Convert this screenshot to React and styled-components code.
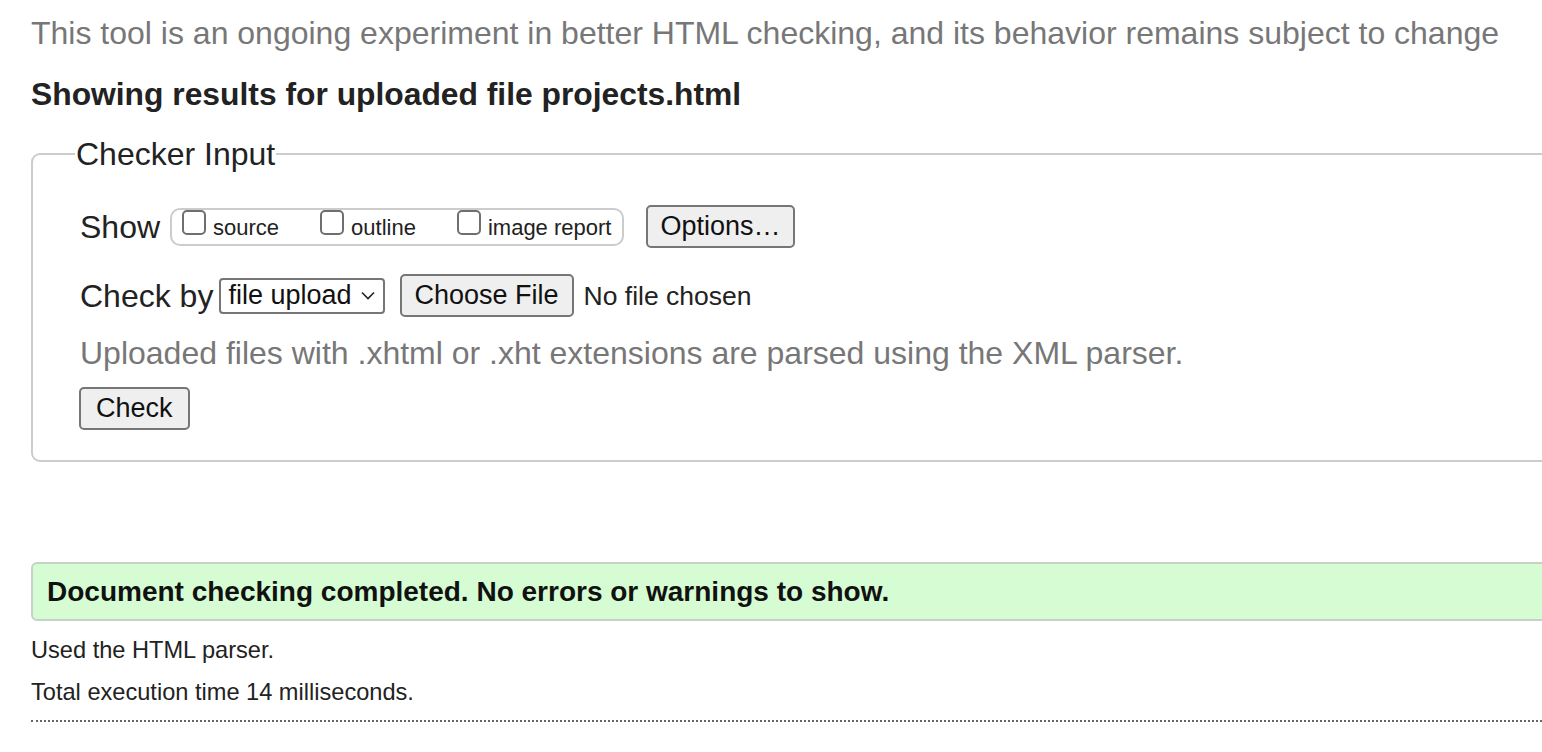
import React from "react";
import styled, { createGlobalStyle } from "styled-components";

const Global = createGlobalStyle`
  html, body {
    margin: 0;
    padding: 0;
    background: #fff;
    overflow: hidden;
  }
  body {
    font-family: "Liberation Sans", Arial, Helvetica, sans-serif;
    color: #222;
  }
`

const Page = styled.div`
  width: calc(100vw + 40px);
  padding: 16px 0 0 31px;
  box-sizing: border-box;
`

const Notice = styled.p`
  margin: 0;
  font-size: 32px;
  line-height: 34px;
  color: #777;
`

const Heading = styled.h2`
  margin: 27px 0 0;
  font-size: 31.8px;
  line-height: 34px;
  font-weight: bold;
  color: #222;
`

const Fieldset = styled.fieldset`
  margin: 26px 0 0;
  padding: 7px 0 30px 47px;
  border: 2px solid #ccc;
  border-radius: 9px;
  min-width: 0;
`

const Legend = styled.legend`
  font-size: 32px;
  line-height: 34px;
  padding: 0 1px;
  margin-left: -5px;
  color: #222;
`

const Row = styled.div`
  display: flex;
  align-items: center;
  gap: ${p => p.$gap || 10}px;
  margin-top: ${p => p.$top || 0}px;
`

const Label = styled.span`
  font-size: ${p => p.$size || 32}px;
  line-height: 34px;
  color: #222;
`

const Group = styled.div`
  display: flex;
  align-items: flex-end;
  height: 34px;
  padding: 0 11px 0 10px;
  border: 2px solid #ccc;
  border-radius: 10px;
  gap: 41px;
  margin-right: 12px;
`

const Choice = styled.label`
  display: flex;
  align-items: flex-end;
  gap: 7px;
  font-size: 22px;
  line-height: 26px;
  color: #222;
  padding-bottom: 3px;
`

const Box = styled.span`
  display: inline-block;
  width: 20px;
  height: 21px;
  border: 2px solid #6f6f6f;
  border-radius: 5px;
  margin-bottom: 6px;
  background: #fff;
`

const Button = styled.button`
  font-family: "Liberation Sans", Arial, sans-serif;
  font-size: 27px;
  line-height: 31px;
  color: #111;
  background: #efefef;
  border: 2px solid #767676;
  border-radius: 5px;
  padding: 4px ${p => p.$pad || 14}px 4px;
  margin: 0 0 0 ${p => p.$left || 0}px;
`

const Select = styled.div`
  display: flex;
  align-items: center;
  gap: 9px;
  height: 32px;
  padding: 0 8px 0 7px;
  border: 2px solid #767676;
  border-radius: 4px;
  font-size: 27px;
  color: #111;
  margin-left: -4px;
`

const Hint = styled.p`
  margin: 19px 0 0;
  font-size: 32px;
  line-height: 34px;
  color: #777;
`

const Status = styled.div`
  margin-top: 100px;
  height: 55px;
  display: flex;
  align-items: center;
  padding-left: 14px;
  border: 2px solid #c6d2c6;
  border-radius: 6px;
  background: #d5fcd2;
  font-size: 28px;
  font-weight: bold;
  color: #111;
`

const Info = styled.p`
  margin: ${p => p.$top || 0}px 0 0;
  font-size: 23.6px;
  line-height: 26px;
  color: #222;
`

const Rule = styled.div`
  margin-top: 15px;
  border-top: 2px dotted #666;
`

const Chevron = () => (
  <svg width="14" height="9" viewBox="0 0 14 9" fill="none">
    <path d="M1 1.5 L7 7.5 L13 1.5" stroke="#222" strokeWidth="1.6" />
  </svg>
)

export default function App() {
  return (
    <Page>
      <Global />
      <Notice>This tool is an ongoing experiment in better HTML checking, and its behavior remains subject to change</Notice>
      <Heading>Showing results for uploaded file projects.html</Heading>
      <Fieldset>
        <Legend>Checker Input</Legend>
        <Row $gap={10} $top={27}>
          <Label>Show</Label>
          <Group>
            <Choice><Box />source</Choice>
            <Choice><Box />outline</Choice>
            <Choice><Box />image report</Choice>
          </Group>
          <Button $pad={12}>Options…</Button>
        </Row>
        <Row $gap={10} $top={26}>
          <Label>Check by</Label>
          <Select>file upload <Chevron /></Select>
          <Button $pad={13} $left={5}>Choose File</Button>
          <Label $size={26.5}>No file chosen</Label>
        </Row>
        <Hint>Uploaded files with .xhtml or .xht extensions are parsed using the XML parser.</Hint>
        <Row $top={17}>
          <Button $pad={15} $left={-1}>Check</Button>
        </Row>
      </Fieldset>
      <Status>Document checking completed. No errors or warnings to show.</Status>
      <Info $top={16}>Used the HTML parser.</Info>
      <Info $top={16}>Total execution time 14 milliseconds.</Info>
      <Rule />
    </Page>
  )
}
